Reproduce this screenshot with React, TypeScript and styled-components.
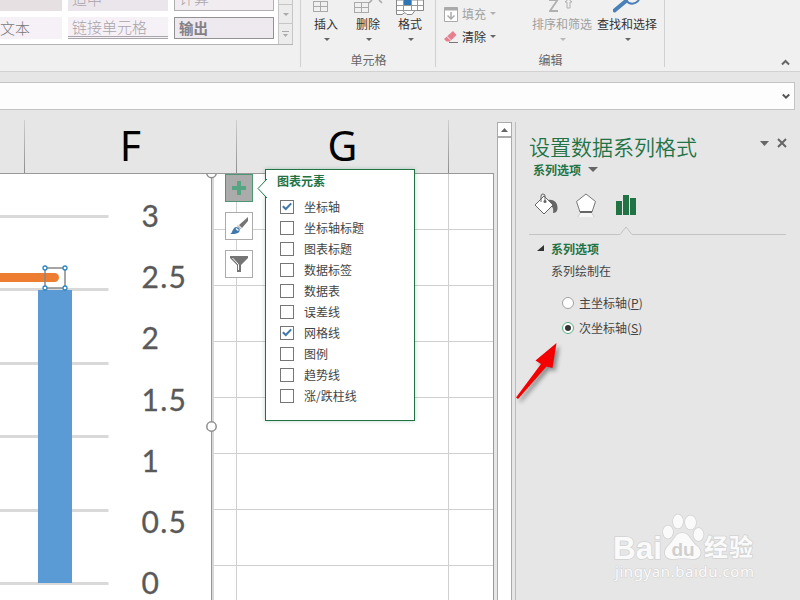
import React from 'react';
import styled, { createGlobalStyle } from 'styled-components';

const GREEN = '#217346';

const GlobalStyle = createGlobalStyle`
  * { box-sizing: border-box; }
  body {
    margin: 0;
    overflow: hidden;
    font-family: "Noto Sans CJK SC", sans-serif;
    font-size: 12px;
    color: #444;
  }
  svg { display: block; flex: none; }
`;

const Window = styled.div`
  position: relative;
  width: 800px;
  height: 600px;
  overflow: hidden;
  display: flex;
  flex-direction: column;
  background: #e6e6e6;
`;

/* Ribbon */
const Ribbon = styled.header`
  display: flex;
  flex: none;
  height: 72px;
  background: #f0f0f0;
  border-bottom: 1px solid #d2d2d2;
`;
const Gallery = styled.div`
  display: flex;
  width: 293px;
  height: 45px;
  background: #fff;
  border-bottom: 1px solid #b5b5b5;
`;
const StyleGrid = styled.div`
  display: grid;
  flex: none;
  grid-template-columns: 62px 100px 100px;
  grid-template-rows: 11px 22px;
  gap: 6px;
  width: 278px;
`;
const StyleCell = styled.div<{ $bg: string; $color: string; $edge?: string; $bold?: boolean; $linked?: boolean; $top?: boolean; $flush?: boolean }>`
  display: flex;
  align-items: ${p => (p.$top ? 'flex-end' : 'center')};
  overflow: hidden;
  padding: 0 ${p => (p.$flush ? 0 : 4)}px;
  padding-bottom: ${p => (p.$top ? 3 : p.$flush ? 1 : 0)}px;
  background: ${p => p.$bg};
  color: ${p => p.$color};
  border: ${p => (p.$edge ? `1px solid ${p.$edge}` : '0')};
  border-top-width: ${p => (p.$edge && !p.$top ? '1px' : '0')};
  border-bottom: ${p => (p.$linked ? '3px double #aaa5aa' : p.$edge ? `1px solid ${p.$edge}` : '0')};
  font-size: ${p => (p.$bold ? 14.5 : 15)}px;
  font-weight: ${p => (p.$bold ? 700 : 300)};
  line-height: 18px;
  white-space: nowrap;
`;
const GalleryScroll = styled.div`
  display: grid;
  grid-template-rows: 5px 19px 20px;
  width: 15px;
  border: 1px solid #c6c6c6;
  border-width: 0 1px;
  background: #ececec;
`;
const ScrollStep = styled.div`
  display: flex;
  align-items: center;
  justify-content: center;
  border-bottom: 1px solid #c6c6c6;
  &:last-child { border-bottom: 0; }
`;
const Group = styled.section<{ $w: number }>`
  display: grid;
  flex: none;
  grid-template-rows: 50px 21px;
  width: ${p => p.$w}px;
  position: relative;
  &::after {
    content: '';
    position: absolute;
    right: 0;
    top: 0;
    width: 1px;
    height: 67px;
    background: #d0d0d0;
  }
`;
const GroupTools = styled.div<{ $pad: number }>`
  display: flex;
  padding-left: ${p => p.$pad}px;
`;
const GroupLabel = styled.div`
  text-align: center;
  color: #666;
  line-height: 20px;
`;
const BigTool = styled.div<{ $w: number; $off?: boolean }>`
  display: grid;
  grid-template-rows: 16px 18px 10px;
  justify-items: center;
  width: ${p => p.$w}px;
  line-height: 16px;
  color: ${p => (p.$off ? '#a0a0a0' : '#333')};
  white-space: nowrap;
`;
const CaretBox = styled.div`
  padding: 4px 0 0 2px;
`;
const SmallTools = styled.div`
  display: flex;
  flex-direction: column;
  width: 88px;
  padding-top: 2px;
`;
const SmallTool = styled.div<{ $off?: boolean }>`
  display: flex;
  align-items: center;
  gap: 4px;
  height: 23px;
  color: ${p => (p.$off ? '#a0a0a0' : '#333')};
`;
const Collapse = styled.div`
  display: flex;
  flex: 1;
  align-items: flex-end;
  justify-content: flex-end;
  padding: 0 10px 5px 0;
`;
const Spacer = styled.div<{ $w: number }>`
  width: ${p => p.$w}px;
  flex: none;
`;

const FormulaBar = styled.div`
  display: flex;
  flex: none;
  align-items: center;
  justify-content: flex-end;
  width: 795px;
  height: 28px;
  margin-top: 10px;
  padding-right: 4px;
  background: #fdfdfd;
  border: 1px solid #c3c3c3;
  border-left: 0;
`;

/* Worksheet */
const Body = styled.main`
  display: flex;
  flex: 1;
  min-height: 0;
`;
const Sheet = styled.div`
  position: relative;
  flex: none;
  width: 494px;
  display: flex;
  flex-direction: column;
`;
const Headers = styled.div`
  display: grid;
  grid-template-columns: 25px 212px 212px 45px;
  height: 64px;
  padding-top: 10px;
  border-bottom: 1px solid #999;
`;
const ColHead = styled.div<{ $last?: boolean }>`
  padding-top: 2px;
  text-align: center;
  font: 41px/46px "Noto Sans", sans-serif;
  color: #000;
  border-right: ${p => (p.$last ? 0 : 1)}px solid;
  border-image: linear-gradient(#d0d0d0, #8c8c8c) 1;
`;
const Cells = styled.div`
  display: flex;
  flex: 1;
  background:
    linear-gradient(#d0d0d0, #d0d0d0) 236px 0 / 1px 100% no-repeat,
    linear-gradient(#d0d0d0, #d0d0d0) 448px 0 / 1px 100% no-repeat,
    repeating-linear-gradient(transparent 0 55px, #d0d0d0 55px 56px),
    #fff;
  border-right: 1px solid #999;
`;
const ChartButtons = styled.div`
  position: absolute;
  left: 225px;
  top: 64px;
  display: flex;
  flex-direction: column;
  gap: 10px;
`;
const ChartButton = styled.div<{ $active?: boolean }>`
  display: grid;
  place-items: center;
  width: 28px;
  height: 28px;
  background: ${p => (p.$active ? '#ababab' : '#fff')};
  border: 1px solid ${p => (p.$active ? '#4c9672' : '#ababab')};
`;
const Flyout = styled.div`
  position: absolute;
  left: 265px;
  top: 59px;
  width: 150px;
  height: 252px;
  padding: 2px 0 0 14px;
  background: #fff;
  border: 1px solid ${GREEN};
  box-shadow: 0 0 4px rgba(33, 115, 70, 0.3);
`;
const Pointer = styled.svg`
  position: absolute;
  left: -9px;
  top: 9px;
`;
const FlyoutTitle = styled.div`
  margin: 0 0 6px -3px;
  line-height: 18px;
  font-weight: 700;
  color: ${GREEN};
`;
const CheckRow = styled.label`
  display: flex;
  align-items: center;
  gap: 10px;
  height: 21px;
  color: #444;
`;
const CheckBox = styled.span`
  display: grid;
  place-items: center;
  width: 14px;
  height: 14px;
  background: #fff;
  border: 1px solid #767676;
`;

const ScrollBar = styled.div`
  flex: none;
  width: 15px;
  margin: 12px 3px 0;
  background: #fff;
  border: 1px solid #ababab;
  border-bottom: 0;
`;
const ScrollUp = styled.div`
  display: grid;
  place-items: center;
  height: 15px;
  border-bottom: 2px solid #ababab;
`;

/* Format pane */
const Pane = styled.aside`
  flex: 1;
  margin-top: 12px;
  padding: 11px 13px 0 13px;
  border-left: 1px solid #bcbcbc;
`;
const PaneHead = styled.div`
  display: flex;
  align-items: center;
  height: 26px;
`;
const PaneTitle = styled.h1`
  flex: 1;
  margin: 0;
  font-size: 21px;
  font-weight: 350;
  line-height: 26px;
  color: ${GREEN};
`;
const HeadIcons = styled.div`
  display: flex;
  align-items: center;
  gap: 8px;
  margin: -6px 0 0 0;
`;
const SubHead = styled.div<{ $gap: number }>`
  display: flex;
  align-items: center;
  gap: ${p => p.$gap}px;
  height: 20px;
  padding-left: 4px;
  font-weight: 700;
  color: ${GREEN};
`;
const PaneTabs = styled.div`
  display: flex;
  height: 27px;
  margin-top: 14px;
  gap: 12px;
  padding-left: 4px;
`;
const NotchLine = styled.svg`
  margin-top: 6px;
`;
const Section = styled.div`
  padding: 3px 0 0 4px;
`;
const FieldLabel = styled.div`
  margin: 3px 0 9px 18px;
  line-height: 20px;
`;
const Radio = styled.label`
  display: flex;
  align-items: center;
  gap: 5px;
  height: 25px;
  padding-left: 29px;
`;
const Dot = styled.span<{ $on?: boolean }>`
  display: grid;
  place-items: center;
  width: 12px;
  height: 12px;
  border-radius: 50%;
  background: #fff;
  border: 1px solid ${p => (p.$on ? '#5cab82' : '#a2a2a2')};
  &::after {
    content: '';
    width: 6px;
    height: 6px;
    border-radius: 50%;
    background: ${p => (p.$on ? '#333' : 'transparent')};
  }
`;
const Arrow = styled.svg`
  position: absolute;
  left: 510px;
  top: 338px;
  filter: drop-shadow(3px 3px 2px rgba(0, 0, 0, 0.4));
`;
const Watermark = styled.svg`
  position: absolute;
  left: 606px;
  top: 508px;
`;

const Caret = ({ color = '#666', w = 6 }: { color?: string; w?: number }) => (
  <svg width={w} height={Math.ceil(w / 2)} viewBox="0 0 10 5" preserveAspectRatio="none">
    <path d="M0 0H10L5 5Z" fill={color} />
  </svg>
);

const Tick = () => (
  <svg width="10" height="9" viewBox="0 0 10 9">
    <path d="M.8 4.2 3.8 7 9.2 1.4" fill="none" stroke="#3f78ab" strokeWidth="2" />
  </svg>
);

const InsertIcon = () => (
  <svg width="26" height="16" fill="none" stroke="#aaa" shapeRendering="crispEdges">
    <path d="M.5 1.500H14.500V11.500H.5ZM.5 6.500H14.500M7.500 1.500V11.500" />
  </svg>
);
const DeleteIcon = () => (
  <svg width="32" height="16" fill="none" stroke="#aaa">
    <path d="M2.500 2.500H16.500V12.500H2.500ZM2.500 7.500H16.500M9.500 2.500V12.500" shapeRendering="crispEdges" />
    <path d="M17 3 20 0M27 0 30 3" strokeWidth="1.600" />
  </svg>
);
const FormatIcon = () => (
  <svg width="28" height="16" fill="none">
    <path d="M.5 0H27.500V10.500H19L16 14.500H11L9 12.500 6 14.500H.5Z" fill="#fff" stroke="#888" />
    <path d="M.5 5.500H27.500M7.500 0V12M15.500 0V11M21.500 0V10M.5 10.500H21" stroke="#999" shapeRendering="crispEdges" />
    <path d="M8 0H15V5H8Z" fill="#2e75b6" />
  </svg>
);
const FillIcon = () => (
  <svg width="14" height="16" fill="none" stroke="#aaa">
    <path d="M.5 1.500H13.500V15.500H.5Z" fill="#fff" />
    <path d="M.5 3H13.500" strokeWidth="3" />
    <path d="M7 6V13M3.500 9.500 7 13 10.500 9.500" strokeWidth="1.500" />
  </svg>
);
const EraserIcon = () => (
  <svg width="14" height="14">
    <path d="M0 9 9 1 12.500 5 6 11.500H2.500Z" fill="#e4808f" />
    <path d="M2.500 6 7.500 11" stroke="#f0f0f0" />
    <path d="M5 12.500H14" stroke="#777" />
  </svg>
);
const SortIcon = () => (
  <svg width="26" height="16" fill="none" stroke="#b0b0b0">
    <path d="M0 0H8.500L1 11H9" strokeWidth="1.800" />
    <path d="M18 8V2H16L19.500 -1 23 2H21V8Z" />
  </svg>
);
const FindIcon = () => (
  <svg width="28" height="16" fill="none" stroke="#4a80b9">
    <path d="M13 0C16 5 22 5 26 0" strokeWidth="2" />
    <path d="M1.500 10.500 13 1" strokeWidth="4" strokeLinecap="round" />
  </svg>
);

const TICKS = ['3', '2.5', '2', '1.5', '1', '0.5', '0'];
const LINE_YS = [215, 288, 362, 435, 509, 582];

const Chart = () => (
  <svg width="218" height="426" viewBox="0 174 218 426">
    <rect y="174" width="212" height="426" fill="#fff" />
    {LINE_YS.map(y => <rect key={y} y={y} width="108.500" height="3" fill="#d9d9d9" />)}
    {TICKS.map((t, i) => (
      <text key={t} x="141.500" y={227 + i * 61.2} fontFamily="Lato, sans-serif" fontSize="30" fill="#595959"
        stroke="#595959" strokeWidth="0.300" textLength={t.length > 1 ? 44.5 : 17.5}>{t}</text>
    ))}
    <rect x="38" y="290" width="34" height="293" fill="#5b9bd5" />
    <path d="M0 277.500H54.500" stroke="#ed7d31" strokeWidth="9" strokeLinecap="round" />
    <rect x="45" y="268" width="20" height="20" fill="none" stroke="#888" strokeWidth="1.500" />
    {[[45, 268], [65, 268], [45, 288], [65, 288]].map(([x, y]) => (
      <circle key={`${x}-${y}`} cx={x} cy={y} r="2" fill="#fff" stroke="#2b86c3" strokeWidth="1.300" />
    ))}
    <path d="M211.500 174V600" stroke="#969696" />
    <path d="M213 174V600" stroke="#d8d8d8" strokeWidth="2" />
    <circle cx="211.500" cy="173" r="4.700" fill="#fff" stroke="#8c8c8c" strokeWidth="1.500" />
    <circle cx="211.500" cy="426.500" r="4.700" fill="#fff" stroke="#8c8c8c" strokeWidth="1.500" />
  </svg>
);

const ELEMENTS: [string, boolean][] = [
  ['坐标轴', true], ['坐标轴标题', false], ['图表标题', false], ['数据标签', false], ['数据表', false],
  ['误差线', false], ['网格线', true], ['图例', false], ['趋势线', false], ['涨/跌柱线', false],
];

export default function App() {
  return (
    <>
      <GlobalStyle />
      <Window>
        <Ribbon>
          <Gallery>
            <StyleGrid>
              <StyleCell $bg="#e6e0e2" $color="#999" $top />
              <StyleCell $bg="#ebe6eb" $color="#aaa2aa" $top>适中</StyleCell>
              <StyleCell $bg="#f0ecf0" $color="#aaa4aa" $edge="#b0b0b0" $top>计算</StyleCell>
              <StyleCell $bg="#f6f1f7" $color="#777" $flush>文本</StyleCell>
              <StyleCell $bg="#f6f1f7" $color="#aaa4aa" $linked>链接单元格</StyleCell>
              <StyleCell $bg="#eee9ee" $color="#858085" $edge="#929292" $bold>输出</StyleCell>
            </StyleGrid>
            <GalleryScroll>
              <ScrollStep />
              <ScrollStep><Caret color="#aaa" /></ScrollStep>
              <ScrollStep>
                <svg width="7" height="7"><path d="M0 .5H7" stroke="#aaa" /><path d="M1 3H6L3.500 6Z" fill="#aaa" /></svg>
              </ScrollStep>
            </GalleryScroll>
          </Gallery>
          <Group $w={8} />
          <Group $w={135}>
            <GroupTools $pad={4}>
              <BigTool $w={42}><InsertIcon />插入<CaretBox><Caret /></CaretBox></BigTool>
              <BigTool $w={42}><DeleteIcon />删除<CaretBox><Caret /></CaretBox></BigTool>
              <BigTool $w={42}><FormatIcon />格式<CaretBox><Caret /></CaretBox></BigTool>
            </GroupTools>
            <GroupLabel>单元格</GroupLabel>
          </Group>
          <Group $w={229}>
            <GroupTools $pad={8}>
              <SmallTools>
                <SmallTool $off><FillIcon />填充<Caret color="#b0b0b0" /></SmallTool>
                <SmallTool><EraserIcon />清除<Caret /></SmallTool>
              </SmallTools>
              <BigTool $w={60} $off><SortIcon />排序和筛选<CaretBox><Caret color="#b8b8b8" /></CaretBox></BigTool>
              <Spacer $w={5} />
              <BigTool $w={60}><FindIcon />查找和选择<CaretBox><Caret /></CaretBox></BigTool>
            </GroupTools>
            <GroupLabel>编辑</GroupLabel>
          </Group>
          <Collapse>
            <svg width="9" height="7"><path d="M1 5.500 4.500 2 8 5.500" fill="none" stroke="#666" strokeWidth="2" /></svg>
          </Collapse>
        </Ribbon>
        <FormulaBar>
          <svg width="8" height="7"><path d="M.8 1.500 4 4.700 7.200 1.500" fill="none" stroke="#555" strokeWidth="2" /></svg>
        </FormulaBar>
        <Body>
          <Sheet>
            <Headers>
              <ColHead />
              <ColHead>F</ColHead>
              <ColHead>G</ColHead>
              <ColHead $last />
            </Headers>
            <Cells><Chart /></Cells>
            <ChartButtons>
              <ChartButton $active>
                <svg width="14" height="14"><path d="M7 0V14M0 7H14" stroke="#56a582" strokeWidth="4" /></svg>
              </ChartButton>
              <ChartButton>
                <svg width="20" height="20" fill="none">
                  <path d="M19 1V5L13 12 10 9Z" fill="#757575" />
                  <path d="M8.500 9.500 12 13" stroke="#bbb" strokeWidth="1.500" />
                  <path d="M1 18C4 17 3 12 7 11 11 11 12 15 9 17 7 18 4 18 1 18Z" fill="#3f78ab" />
                  <path d="M7 12.500 9.500 14.500" stroke="#fff" strokeWidth="1.500" />
                </svg>
              </ChartButton>
              <ChartButton>
                <svg width="20" height="20">
                  <path d="M1 2H19V4L12 11V18H8V11L1 4Z" fill="#757575" />
                  <path d="M3.500 4 9.500 10.500V16" fill="none" stroke="#fff" />
                </svg>
              </ChartButton>
            </ChartButtons>
            <Flyout>
              <Pointer width="10" height="20">
                <path d="M10 0 1 9.500 10 19" fill="#fff" stroke={GREEN} />
              </Pointer>
              <FlyoutTitle>图表元素</FlyoutTitle>
              {ELEMENTS.map(([name, on]) => (
                <CheckRow key={name}><CheckBox>{on && <Tick />}</CheckBox>{name}</CheckRow>
              ))}
            </Flyout>
          </Sheet>
          <ScrollBar>
            <ScrollUp><svg width="7" height="4"><path d="M0 4 3.500 0 7 4Z" fill="#666" /></svg></ScrollUp>
          </ScrollBar>
          <Pane>
            <PaneHead>
              <PaneTitle>设置数据系列格式</PaneTitle>
              <HeadIcons>
                <Caret w={9} />
                <svg width="10" height="10"><path d="M1 1 9 9M9 1 1 9" stroke="#666" strokeWidth="2" /></svg>
              </HeadIcons>
            </PaneHead>
            <SubHead $gap={7}>系列选项<Caret w={10} /></SubHead>
            <PaneTabs>
              <svg width="28" height="25">
                <path d="M15 7C22 6 25 11 24.500 16 24 19 22 20 20 20 21 15 19 12 15 12Z" fill="#666" />
                <path d="M2 12 11 3 20 12 11 21Z" fill="#fff" stroke="#666" />
                <path d="M8 9V3Q8 1 10 1T12 3V8" fill="none" stroke="#666" />
                <circle cx="12" cy="8.500" r="1.500" fill="#666" />
              </svg>
              <svg width="26" height="25">
                <path d="M7 20 5 24H21L19 20Z" fill="#f6f6f6" />
                <path d="M7 20 5 24M19 20 21 24" stroke="#ccc" />
                <path d="M13 1 22.500 8.500 19 19H7L3.500 8.500Z" fill="#fff" stroke="#777" />
                <path d="M7 19H19" stroke="#666" strokeWidth="2" />
              </svg>
              <svg width="26" height="25" fill={GREEN}>
                <path d="M5 8H11V22H5ZM12 2H18V22H12ZM19 5H25V22H19Z" />
              </svg>
            </PaneTabs>
            <NotchLine width="257" height="9" fill="none" stroke="#c3c3c3">
              <path d="M0 8.500H91L97 1 103 8.500H257" />
            </NotchLine>
            <Section>
              <SubHead $gap={7}>
                <svg width="7" height="7"><path d="M7 0V6H0Z" fill="#333" /></svg>系列选项
              </SubHead>
              <FieldLabel>系列绘制在</FieldLabel>
              <Radio><Dot /><span>主坐标轴(<u>P</u>)</span></Radio>
              <Radio><Dot $on /><span>次坐标轴(<u>S</u>)</span></Radio>
            </Section>
          </Pane>
        </Body>
        <Arrow width="60" height="70">
          <path d="M6 59.500 31 26 25.500 22.500 46.500 5 42.500 30 36.500 28.500 8 61Z" fill="#f40000" />
        </Arrow>
        <Watermark width="160" height="80" fill="#fafafa" stroke="#d2d2d2" strokeWidth="1.500" paintOrder="stroke"
          fontFamily="Liberation Sans, sans-serif">
          <text x="7" y="51" fontSize="31" fontWeight="700" textLength="49" lengthAdjust="spacingAndGlyphs">Bai</text>
          <ellipse cx="62" cy="24" rx="5" ry="6.500" />
          <ellipse cx="72" cy="13.500" rx="5" ry="7" />
          <ellipse cx="84.500" cy="14.500" rx="5.500" ry="7" />
          <ellipse cx="92.500" cy="26.500" rx="5" ry="6.500" />
          <path d="M76 25C84 25 84 33 91 38 98 44 94 52 86 51 79 50 75 50 68 51 59 52 56 44 62 38 68 33 69 25 76 25Z" />
          <text x="65.500" y="48" fontSize="19" fontWeight="700" fill="#cfcfcf" stroke="none">du</text>
          <text x="98" y="48" fontFamily="Noto Sans CJK SC, sans-serif" fontSize="24" fontWeight="700" textLength="49">经验</text>
          <text x="9" y="69" fontFamily="Noto Sans, sans-serif" fontSize="15" strokeWidth="1" textLength="139">jingyan.baidu.com</text>
        </Watermark>
      </Window>
    </>
  );
}
